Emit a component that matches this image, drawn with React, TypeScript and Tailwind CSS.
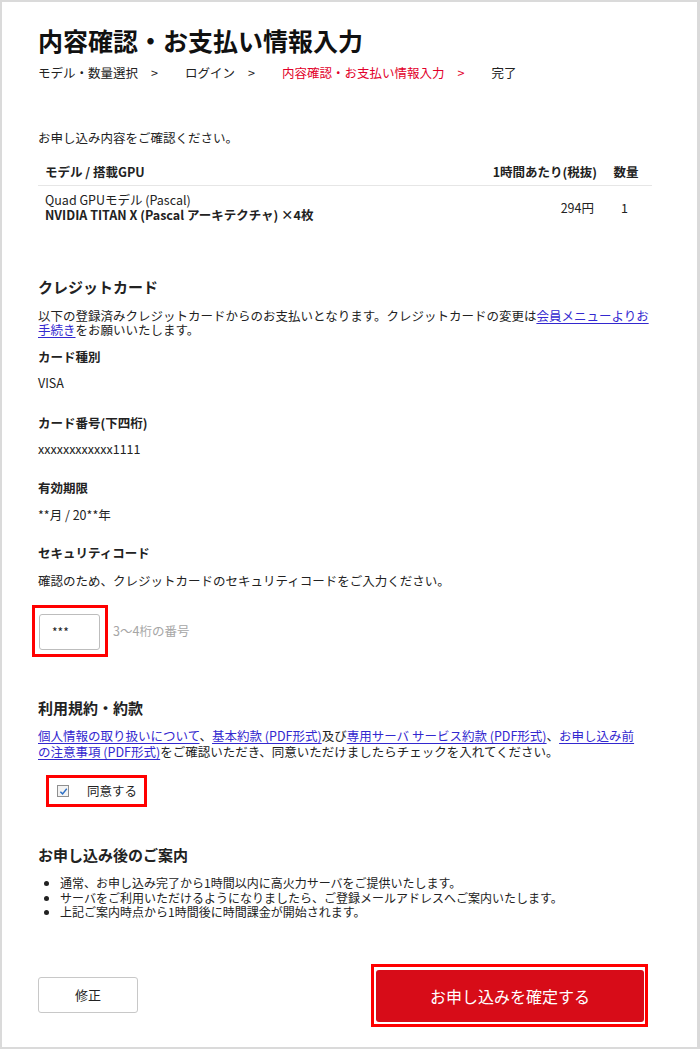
import React from "react";

const crumbs = [
  { label: "モデル・数量選択", active: false, arrow: true },
  { label: "ログイン", active: false, arrow: true },
  { label: "内容確認・お支払い情報入力", active: true, arrow: true },
  { label: "完了", active: false, arrow: false },
];

const notes = [
  "通常、お申し込み完了から1時間以内に高火力サーバをご提供いたします。",
  "サーバをご利用いただけるようになりましたら、ご登録メールアドレスへご案内いたします。",
  "上記ご案内時点から1時間後に時間課金が開始されます。",
];

function Link({ children }: { children: React.ReactNode }) {
  return <a className="text-[#3328cf] underline underline-offset-2">{children}</a>;
}

export default function App() {
  return (
    <div className="h-[1049px] w-[700px] border-t-2 border-l-2 border-r-[3px] border-b-2 border-[#dadada] bg-white pl-[36px] pr-[45px] pt-[23px] font-['Noto_Sans_CJK_JP','Noto_Sans',sans-serif] text-[12.5px] text-[#222]">
      {/* Title + steps */}
      <h1 className="text-[25px] font-bold leading-[30px] text-[#111]">内容確認・お支払い情報入力</h1>
      <div className="mt-[10px] flex items-center leading-[16px]">
        {crumbs.map((c, i) => (
          <div key={i} className={c.active ? "flex text-[#e2002a]" : "flex"}>
            <span>{c.label}</span>
            {c.arrow && <span className="ml-[13px] mr-[27px]">&gt;</span>}
          </div>
        ))}
      </div>

      {/* Order summary */}
      <p className="mt-[49px] leading-[16px]">お申し込み内容をご確認ください。</p>
      <div className="mt-[14px]">
        <div className="flex border-b border-[#e6e6e6] pt-[4px] pb-[5px] font-bold leading-[16px]">
          <div className="flex-1 pl-[7px]">モデル / 搭載GPU</div>
          <div className="w-[180px] text-right">1時間あたり(税抜)</div>
          <div className="w-[55px] pl-[3px] text-center">数量</div>
        </div>
        <div className="flex items-center pt-[6px] leading-[15px]">
          <div className="flex-1 pl-[7px]">
            <div>Quad GPUモデル (Pascal)</div>
            <div className="font-bold">NVIDIA TITAN X (Pascal アーキテクチャ) ×4枚</div>
          </div>
          <div className="w-[160px] pr-[3px] text-right">294円</div>
          <div className="w-[55px] text-center">1</div>
        </div>
      </div>

      {/* Credit card */}
      <h2 className="mt-[55px] text-[15px] font-bold leading-[20px]">クレジットカード</h2>
      <p className="mt-[12px] leading-[14px]">
        以下の登録済みクレジットカードからのお支払いとなります。クレジットカードの変更は
        <Link>会員メニューよりお手続き</Link>をお願いいたします。
      </p>
      <h3 className="mt-[12px] font-bold leading-[16px]">カード種別</h3>
      <p className="mt-[10px] leading-[16px]">VISA</p>
      <h3 className="mt-[24px] font-bold leading-[16px]">カード番号(下四桁)</h3>
      <p className="mt-[10px] leading-[16px]">xxxxxxxxxxxx1111</p>
      <h3 className="mt-[23px] font-bold leading-[16px]">有効期限</h3>
      <p className="mt-[11px] leading-[16px]">**月 / 20**年</p>
      <h3 className="mt-[22px] font-bold leading-[16px]">セキュリティコード</h3>
      <p className="mt-[12px] leading-[16px]">確認のため、クレジットカードのセキュリティコードをご入力ください。</p>
      <div className="mt-[16px] flex items-center">
        <div className="-ml-[6px] border-[3px] border-[#ff0000] pl-[4px] pr-[5px] pt-[6px] pb-[4px]">
          <div className="flex h-[36px] w-[61px] items-center rounded-[3px] border border-[#bdbdbd] pl-[12px] text-[12px]">
            ***
          </div>
        </div>
        <span className="ml-[5px] text-[#a6a6a6]">3〜4桁の番号</span>
      </div>

      {/* Terms */}
      <h2 className="mt-[41px] text-[15px] font-bold leading-[20px]">利用規約・約款</h2>
      <p className="mt-[10px] leading-[16px]">
        <Link>個人情報の取り扱いについて</Link>、<Link>基本約款 (PDF形式)</Link>及び
        <Link>専用サーバ サービス約款 (PDF形式)</Link>、
        <Link>
          お申し込み前
          <br />
          の注意事項 (PDF形式)
        </Link>
        をご確認いただき、同意いただけましたらチェックを入れてください。
      </p>
      <div className="mt-[15px] ml-[8px] flex w-[101px] items-center border-[3px] border-[#ff0000] py-[6px] pl-[8px]">
        <span className="flex h-[12px] w-[12px] items-center justify-center border border-[#8f8f8f] bg-[#f3f3f3]">
          <svg viewBox="0 0 10 10" className="h-[9px] w-[9px]">
            <path d="M1.5 5.2 L4 7.6 L8.6 2" fill="none" stroke="#2d6fc4" strokeWidth="1.6" />
          </svg>
        </span>
        <span className="ml-[18px] leading-[14px]">同意する</span>
      </div>

      {/* After order */}
      <h2 className="mt-[38px] text-[15px] font-bold leading-[20px]">お申し込み後のご案内</h2>
      <ul className="mt-[11px] list-disc pl-[22px] text-[12px] leading-[14.5px]">
        {notes.map((n, i) => (
          <li key={i}>{n}</li>
        ))}
      </ul>

      {/* Actions */}
      <div className="mt-[44px] mr-[4px] flex items-center justify-between">
        <button className="h-[36px] w-[100px] rounded-[3px] border border-[#c8c8c8] bg-white text-[13px] text-[#222]">
          修正
        </button>
        <div className="border-[3px] border-[#ff0000] pt-[3px] pb-[2px] pl-[2px] pr-[1px]">
          <button className="h-[52px] w-[268px] rounded-[3px] bg-[#d70c18] text-[16px] text-white">
            お申し込みを確定する
          </button>
        </div>
      </div>
    </div>
  );
}
